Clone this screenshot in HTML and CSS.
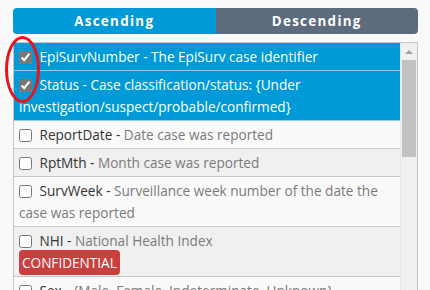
FILE: index.html
```html
<!DOCTYPE html>
<html>
<head>
  <meta charset="UTF-8">
  <title>Variables</title>
  <link rel="stylesheet" href="styles.css">
</head>
<body>

  <div class="wrap">
    <div class="tabs">
      <div class="tab tab-on">Ascending</div>
      <div class="tab tab-off">Descending</div>
    </div>

    <div class="panel">
      <div class="list">
        <div class="row sel">
          <input type="checkbox" checked> EpiSurvNumber - The EpiSurv case identifier
        </div>
        <div class="row sel">
          <input type="checkbox" checked> Status - Case classification/status: {Under investigation/suspect/probable/confirmed}
        </div>
        <div class="row">
          <input type="checkbox"> <span class="name">ReportDate</span> - <span class="desc">Date case was reported</span>
        </div>
        <div class="row alt">
          <input type="checkbox"> <span class="name">RptMth</span> - <span class="desc">Month case was reported</span>
        </div>
        <div class="row">
          <input type="checkbox"> <span class="name">SurvWeek</span> - <span class="desc">Surveillance week number of the date the case was reported</span>
        </div>
        <div class="row alt">
          <input type="checkbox"> <span class="name">NHI</span> - <span class="desc">National Health Index</span>
          <div class="badge">CONFIDENTIAL</div>
        </div>
        <div class="row">
          <input type="checkbox"> <span class="name">Sex</span> - <span class="desc">{Male, Female, Indeterminate, Unknown}</span>
        </div>
      </div>

      <div class="scrollbar">
        <div class="arrow"></div>
        <div class="thumb"></div>
      </div>
    </div>

    <!-- annotation circle round the ticked boxes -->
    <div class="mark"></div>
  </div>

</body>
</html>
```

FILE: styles.css
```css
body {
  margin: 0;
  background-color: #f9f9f9;
  font-family: "Open Sans", Arial, sans-serif;
  font-size: 13.6px;
}

.wrap {
  position: relative;
  width: 405px;
  padding: 8px 0 0 13px;
}

.tabs {
  display: flex;
  height: 26px;
}

.tab {
  flex: 1;
  color: white;
  font-size: 13.4px;
  font-weight: bold;
  letter-spacing: 1.3px;
  text-align: center;
  line-height: 26px;
}

.tab-on {
  background-color: #009ad9;
  border-radius: 4px 0 0 4px;
}

.tab-off {
  background-color: #5c6b7e;
  border-radius: 0 4px 4px 0;
}

.panel {
  display: flex;
  margin-top: 8px;
  height: 260px;
  border: 1px solid #c6c6c6;
  overflow: hidden;
}

.list {
  flex: 1;
}

.row {
  padding: 3px 5px 2px 5px;
  line-height: 22px;
  background-color: #fafafa;
  border-bottom: 1px solid #c8c8c8;
  color: #333;
}

.row.alt {
  background-color: #f0f0f0;
}

.row.sel {
  background-color: #009ad9;
  color: white;
  border-bottom-color: #8fcdee;
}

.row input {
  width: 13px;
  height: 13px;
  margin: 0 4px 0 0;
  vertical-align: -2px;
  accent-color: #777;
}

.desc {
  color: #7a7a7a;
}

.badge {
  width: fit-content;
  margin: -2px 0 -1px 0;
  padding: 0 3px;
  line-height: 25px;
  background-color: #c9403f;
  color: white;
  border-radius: 4px;
}

.scrollbar {
  width: 16px;
  background-color: #f0f0f0;
  border-left: 1px solid #e6e6e6;
}

.arrow {
  width: 0;
  height: 0;
  margin: 7px auto 6px;
  border-left: 4px solid transparent;
  border-right: 4px solid transparent;
  border-bottom: 4px solid #a3a3a3;
}

.thumb {
  margin: 0 1px;
  height: 97px;
  background-color: #c1c1c1;
}

.mark {
  position: absolute;
  left: 5px;
  top: 36px;
  width: 35px;
  height: 67px;
  box-sizing: border-box;
  border: 3px solid #e8141c;
  border-radius: 50%;
}
```
